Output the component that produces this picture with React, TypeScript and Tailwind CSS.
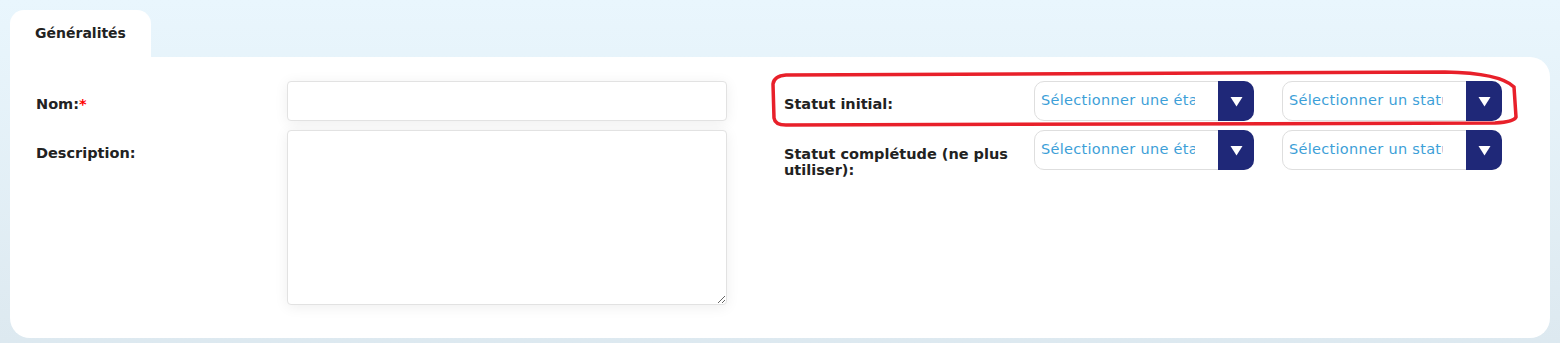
import React from "react";

function Select({ text }: { text: string }) {
  return (
    <div className="flex h-[40px] w-[220px] rounded-[10px] border border-[#dedede] bg-white">
      <div className="flex flex-1 items-center pl-[6px]">
        <div className="w-[154px] overflow-hidden whitespace-nowrap text-[14.5px] tracking-[0.3px] text-[#3d9fd8]">{text}</div>
      </div>
      <div className="-my-px -mr-px flex w-[36px] items-center justify-center rounded-r-[10px] bg-[#1f2878]">
        <svg width="13" height="11" viewBox="0 0 13 11">
          <path d="M0.5 1 L12.5 1 L6.5 10.5 Z" fill="#fff" />
        </svg>
      </div>
    </div>
  );
}

export default function App() {
  return (
    <div
      className="relative h-[343px] w-[1560px] overflow-hidden bg-linear-to-b from-[#e9f6fd] to-[#dde9f0] px-[10px] pt-[10px] text-[#222]"
      style={{ fontFamily: '"DejaVu Sans", "Liberation Sans", sans-serif' }}
    >
      <div className="flex h-[47px] w-[141px] items-center justify-center rounded-t-[14px] bg-white text-[14px] font-bold">
        Généralités
      </div>
      <div className="flex h-[281px] rounded-b-[20px] rounded-tr-[20px] bg-white pl-[26px] pt-[24px]">
        <div className="flex w-[251px] shrink-0 flex-col gap-[9px] text-[14.5px] font-bold">
          <div className="h-[40px] pt-[13px] leading-5">
            Nom:<span className="text-[#f00]">*</span>
          </div>
          <div className="pt-[13px] leading-5">Description:</div>
        </div>
        <div className="flex w-[440px] shrink-0 flex-col gap-[9px]">
          <input className="h-[40px] rounded-[4px] border border-[#e2e2e2] bg-white shadow-[0_2px_14px_rgba(0,0,0,0.07)] outline-none" />
          <textarea className="h-[175px] rounded-[4px] border border-[#e2e2e2] bg-white shadow-[0_2px_14px_rgba(0,0,0,0.07)] outline-none" />
        </div>
        <div className="ml-[57px] flex flex-col gap-[9px]">
          <div className="flex h-[40px] items-start">
            <div className="w-[250px] pt-[13px] text-[14.5px] font-bold leading-5">Statut initial:</div>
            <Select text="Sélectionner une état" />
            <div className="w-[28px]" />
            <Select text="Sélectionner un statut" />
          </div>
          <div className="flex h-[40px] items-start">
            <div className="w-[250px] pr-[4px] pt-[16px] text-[14.5px] font-bold leading-4">
              Statut complétude (ne plus utiliser):
            </div>
            <Select text="Sélectionner une état" />
            <div className="w-[28px]" />
            <Select text="Sélectionner un statut" />
          </div>
        </div>
      </div>
      <svg className="pointer-events-none absolute left-0 top-0" width="1560" height="343">
        <path
          d="M786 75 L1445 72 Q1500 73 1514 87 L1516 117 Q1514 122 1495 123 L786 125 Q775 125 774 118 L773 84 Q774 76 786 75 Z"
          fill="none"
          stroke="#e8202a"
          strokeWidth="3.5"
        />
      </svg>
    </div>
  );
}
